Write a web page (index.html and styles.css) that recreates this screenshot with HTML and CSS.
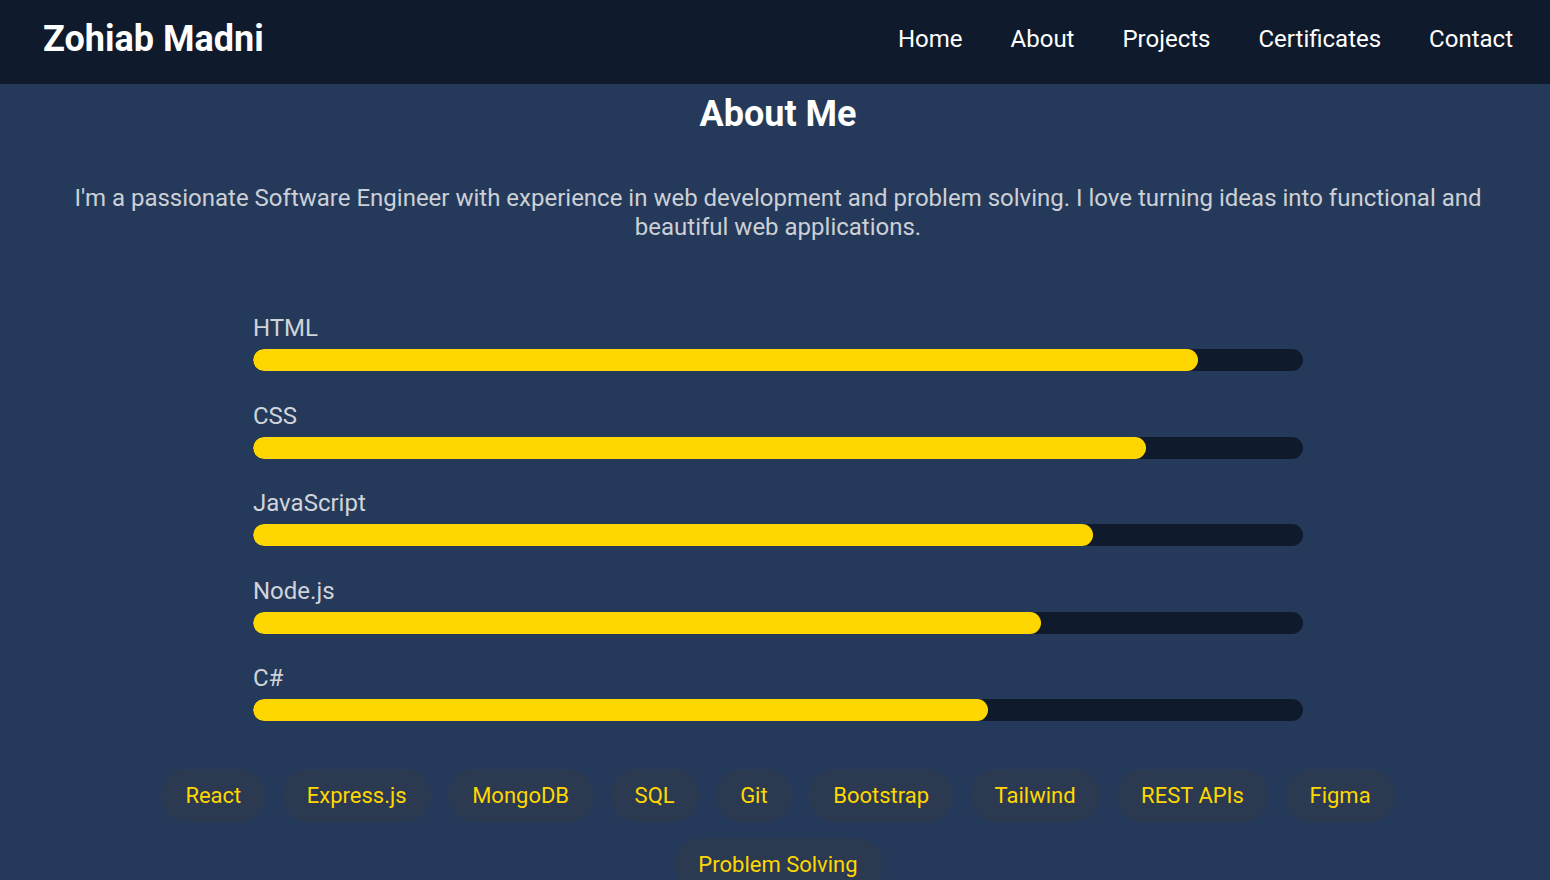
FILE: index.html
```html
<!DOCTYPE html>
<html lang="en">
<head>
<meta charset="utf-8">
<title>Zohiab Madni</title>
<link rel="stylesheet" href="styles.css">
</head>
<body>
<header class="site-header">
  <div class="logo">Zohiab Madni</div>
  <nav class="nav">
    <a href="#">Home</a>
    <a href="#">About</a>
    <a href="#">Projects</a>
    <a href="#">Certificates</a>
    <a href="#">Contact</a>
  </nav>
</header>
<main class="about">
  <h2 class="about-title">About Me</h2>
  <p class="about-text">I'm a passionate Software Engineer with experience in web development and problem solving. I love turning ideas into functional and beautiful web applications.</p>
  <div class="skills">
    <div class="skill">
      <div class="skill-name">HTML</div>
      <div class="bar"><div class="fill" style="width:90%"></div></div>
    </div>
    <div class="skill">
      <div class="skill-name">CSS</div>
      <div class="bar"><div class="fill" style="width:85%"></div></div>
    </div>
    <div class="skill">
      <div class="skill-name">JavaScript</div>
      <div class="bar"><div class="fill" style="width:80%"></div></div>
    </div>
    <div class="skill">
      <div class="skill-name">Node.js</div>
      <div class="bar"><div class="fill" style="width:75%"></div></div>
    </div>
    <div class="skill">
      <div class="skill-name">C#</div>
      <div class="bar"><div class="fill" style="width:70%"></div></div>
    </div>
  </div>
  <div class="tags">
    <span class="tag">React</span>
    <span class="tag">Express.js</span>
    <span class="tag">MongoDB</span>
    <span class="tag">SQL</span>
    <span class="tag">Git</span>
    <span class="tag">Bootstrap</span>
    <span class="tag">Tailwind</span>
    <span class="tag">REST APIs</span>
    <span class="tag">Figma</span>
    <span class="tag">Problem Solving</span>
  </div>
</main>
</body>
</html>
```

FILE: styles.css
```css
* { box-sizing: border-box; }
html, body { margin: 0; padding: 0; }
body {
  font-family: Roboto, "Liberation Sans", Arial, sans-serif;
  background: #253a5a;
  color: #fff;
  overflow: hidden;
}
.site-header {
  height: 84px;
  background: #0f1b2c;
  display: flex;
  align-items: center;
  justify-content: space-between;
  padding: 0 37px 6px 43px;
}
.logo {
  font-size: 36px;
  font-weight: 700;
  color: #fff;
}
.nav {
  display: flex;
  gap: 48px;
}
.nav a {
  color: #fff;
  text-decoration: none;
  font-size: 24px;
}
.about {
  padding: 9px 40px 0 46px;
  text-align: center;
}
.about-title {
  margin: 0;
  font-size: 36px;
  font-weight: 700;
  line-height: 42px;
}
.about-text {
  margin: 49px 0 0;
  font-size: 24px;
  line-height: 29px;
  color: #ccd0d6;
}
.skills {
  width: 1050px;
  margin: 73px auto 0;
  text-align: left;
}
.skill { margin-bottom: 31.5px; }
.skill-name {
  font-size: 24px;
  line-height: 26px;
  color: #d0d4da;
  margin-bottom: 8px;
}
.bar {
  height: 22px;
  background: #0f1b2c;
  border-radius: 11px;
  overflow: hidden;
}
.fill {
  height: 100%;
  background: #ffd700;
  border-radius: 11px;
}
.tags {
  max-width: 1300px;
  margin: 48px auto 0;
  display: flex;
  flex-wrap: wrap;
  justify-content: center;
  gap: 16px 17.5px;
}
.tag {
  background: #2b3a50;
  color: #ffd700;
  font-size: 22px;
  line-height: 27px;
  padding: 13px 24px;
  border-radius: 27px;
}
```
